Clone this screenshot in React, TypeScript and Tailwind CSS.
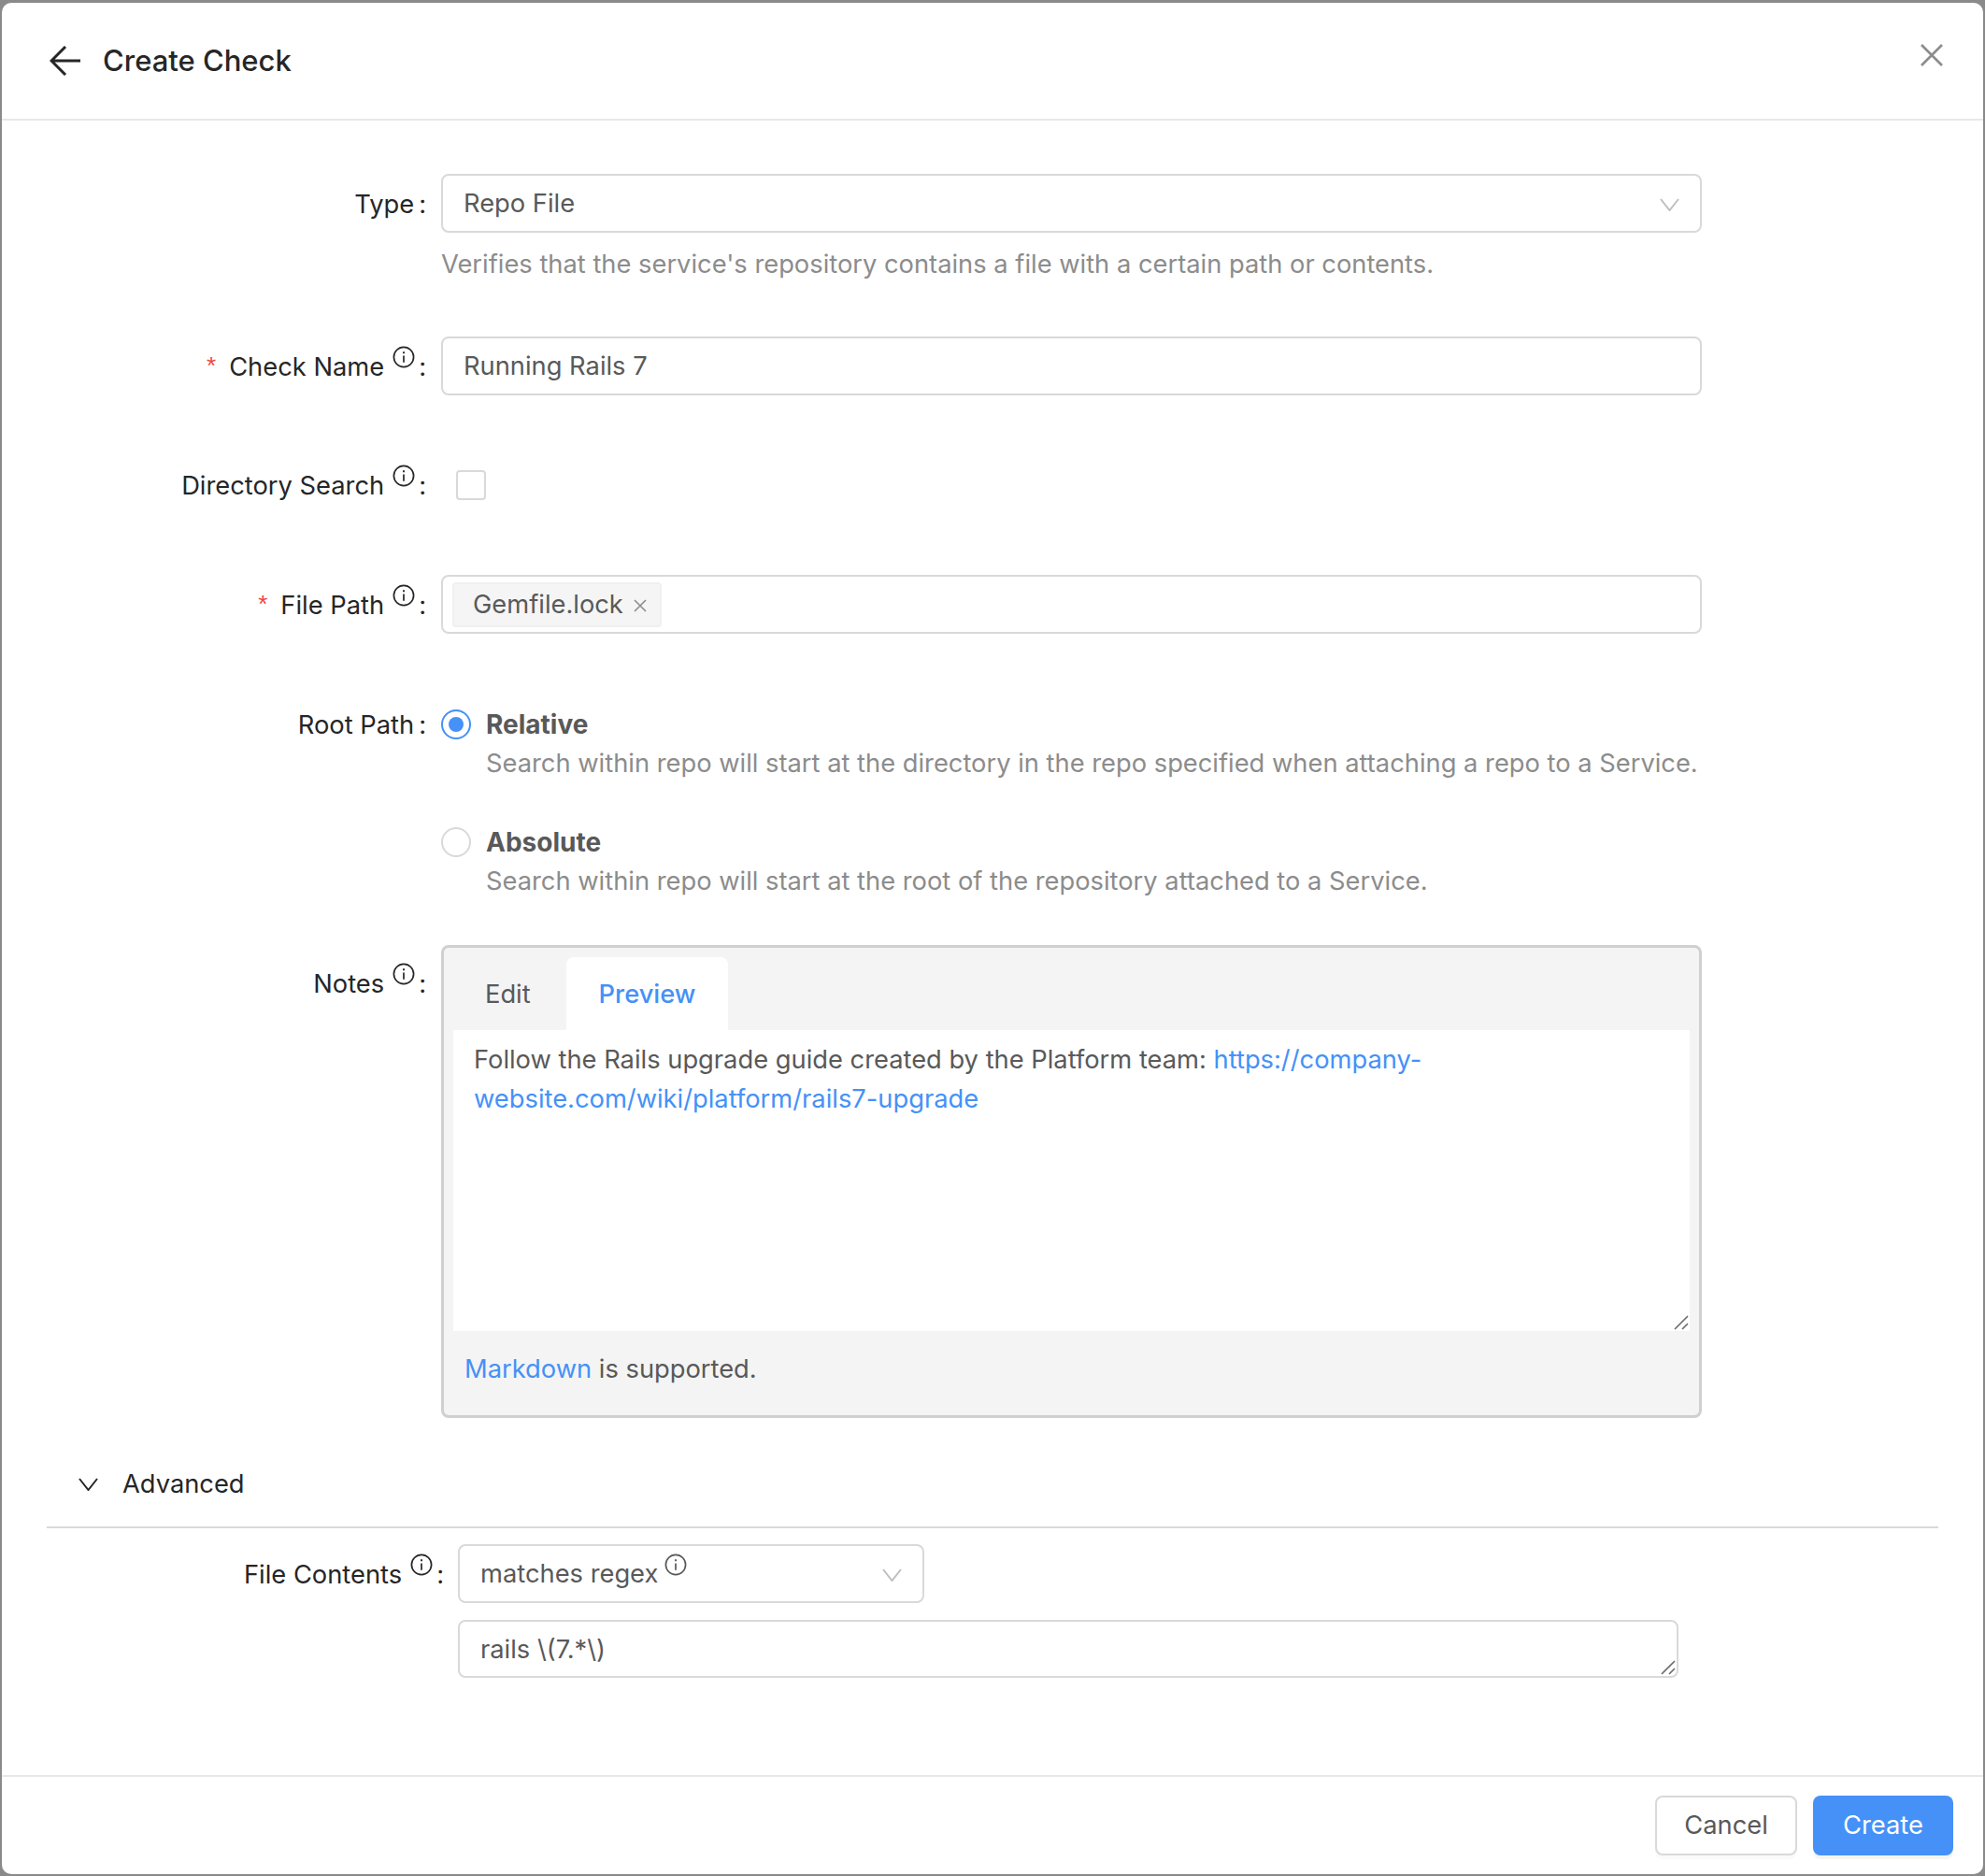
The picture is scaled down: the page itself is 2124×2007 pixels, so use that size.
const font = { fontFamily: 'Inter, "Noto Sans", sans-serif' };

const InfoIcon = ({ className = 'text-[#262626]' }: { className?: string }) => (
  <svg viewBox="0 0 24 24" fill="none" stroke="currentColor" className={`w-6 h-6 shrink-0 ${className}`}>
    <circle cx="12" cy="12" r="10.6" strokeWidth="1.7" />
    <path d="M12 10.5v7.2" strokeWidth="1.7" />
    <path d="M12 6.2v2" strokeWidth="1.9" />
  </svg>
);

const Chevron = ({ className = '' }: { className?: string }) => (
  <svg viewBox="0 0 21 14" fill="none" stroke="currentColor" strokeWidth="2" className={`w-[21px] h-[14px] shrink-0 ${className}`}>
    <path d="M1 1l9.5 12L20 1" />
  </svg>
);

const ResizeHandle = ({ className = '' }: { className?: string }) => (
  <svg viewBox="0 0 16 16" fill="none" stroke="#6b6b6b" strokeWidth="1.6" className={`absolute w-4 h-4 ${className}`}>
    <path d="M1 15L15 1M9 15l6-6" />
  </svg>
);

// label column of a form row, right aligned with the colon at the end
const Label = ({ text, required, info, width = 'w-[406px]' }: { text: string; required?: boolean; info?: boolean; width?: string }) => (
  <div className={`${width} shrink-0 h-[63px] pt-[3px] flex items-center justify-end text-[#262626]`}>
    {required && <span className="text-[#ef4444] mr-[14px] mt-[-4px] text-[26px]" style={{ fontFamily: '"Liberation Sans", sans-serif' }}>*</span>}
    <span>{text}</span>
    {info && <span className="ml-[9px] mt-[-22px]"><InfoIcon /></span>}
    <span className={info ? 'ml-[4px]' : 'ml-[5px]'}>:</span>
  </div>
);

const Box = ({ children, className = '' }: { children: React.ReactNode; className?: string }) => (
  <div className={`h-[63px] pt-[2px] flex items-center border-2 border-[#d9d9d9] rounded-[8px] bg-white text-[#595959] ${className}`}>
    {children}
  </div>
);

const RadioOption = ({ label, desc, checked }: { label: string; desc: string; checked?: boolean }) => (
  <div className="flex gap-[16px]">
    {checked ? (
      <div className="w-8 h-8 mt-[5px] rounded-full border-2 border-[#4591f7] flex items-center justify-center">
        <div className="w-4 h-4 rounded-full bg-[#4591f7]" />
      </div>
    ) : (
      <div className="w-8 h-8 mt-[5px] rounded-full border-2 border-[#d9d9d9]" />
    )}
    <div className="leading-[42px]">
      <div className="font-bold text-[28px] text-[#595959]">{label}</div>
      <div className="text-[#8c8c8c]">{desc}</div>
    </div>
  </div>
);

export default function App() {
  return (
    <div className="w-[2124px] h-[2007px] bg-[#8a8a8a] pt-[3px] px-[2px] pb-[2px] text-[27.3px] overflow-hidden" style={font}>
      <div className="h-full bg-white rounded-[10px] flex flex-col">
        {/* Header */}
        <div className="h-[126px] shrink-0 border-b-2 border-[#e8e8e8] flex justify-between pl-[51px] pr-[43px]">
          <div className="flex items-center gap-[23px] h-[124px]">
            <svg viewBox="0 0 34 32" fill="none" stroke="#262626" strokeWidth="3" className="w-[34px] h-8">
              <path d="M33 16H3M17 1L2 16l15 15" />
            </svg>
            <h1 className="text-[31px] font-medium text-[#262626]">Create Check</h1>
          </div>
          <svg viewBox="0 0 24 24" fill="none" stroke="#8c8c8c" strokeWidth="2.6" className="w-6 h-6 mt-[44px]">
            <path d="M1 1l22 22M23 1L1 23" />
          </svg>
        </div>

        {/* Form */}
        <div className="flex-1 pl-[48px] pr-[48px] pt-[57px]">
          <div className="flex gap-[16px]">
            <Label text="Type" />
            <div className="w-[1349px]">
              <Box className="px-[22px] justify-between">
                <span>Repo File</span>
                <Chevron className="text-[#bfbfbf]" />
              </Box>
              <div className="text-[#8c8c8c] leading-[42px] mt-[13px]">Verifies that the service's repository contains a file with a certain path or contents.</div>
            </div>
          </div>

          <div className="flex gap-[16px] mt-[56px]">
            <Label text="Check Name" required info />
            <Box className="w-[1349px] px-[22px]">Running Rails 7</Box>
          </div>

          <div className="flex gap-[16px] mt-[64px]">
            <Label text="Directory Search" info />
            <div className="h-[63px] flex items-center pl-[16px]">
              <div className="w-8 h-8 border-2 border-[#d9d9d9] rounded-[4px]" />
            </div>
          </div>

          <div className="flex gap-[16px] mt-[65px]">
            <Label text="File Path" required info />
            <Box className="w-[1349px] px-[10px] !pt-0">
              <div className="h-[48px] w-[224px] pt-[2px] flex items-center justify-between pl-[20px] pr-[14px] bg-[#f5f5f5] border-2 border-[#f0f0f0] rounded-[4px]">
                <span>Gemfile.lock</span>
                <svg viewBox="0 0 14 14" fill="none" stroke="#8c8c8c" strokeWidth="1.6" className="w-[14px] h-[14px]">
                  <path d="M1 1l12 12M13 1L1 13" />
                </svg>
              </div>
            </Box>
          </div>

          <div className="flex gap-[16px] mt-[76px]">
            <div className="mt-[-11px]">
              <Label text="Root Path" />
            </div>
            <div className="flex flex-col gap-[42px]">
              <RadioOption label="Relative" checked desc="Search within repo will start at the directory in the repo specified when attaching a repo to a Service." />
              <RadioOption label="Absolute" desc="Search within repo will start at the root of the repository attached to a Service." />
            </div>
          </div>

          <div className="flex gap-[16px] mt-[47px]">
            <div className="mt-[9px]">
              <Label text="Notes" info />
            </div>
            <div className="w-[1349px] h-[506px] border-[3px] border-[#d0d0d0] rounded-[8px] bg-[#f4f4f4] px-[10px] pt-[10px] flex flex-col">
              <div className="flex h-[78px] shrink-0">
                <div className="w-[121px] pl-[34px] pt-[2px] flex items-center text-[#595959]">Edit</div>
                <div className="w-[173px] pt-[2px] flex items-center justify-center bg-white rounded-t-[8px] text-[#4591f7] font-medium">Preview</div>
              </div>
              <div className="relative h-[322px] shrink-0 bg-white px-[22px] pt-[11px] leading-[42px] text-[#595959]">
                <p>
                  Follow the Rails upgrade guide created by the Platform team:{' '}
                  <span className="text-[#4591f7]">https://company-<br />website.com/wiki/platform/rails7-upgrade</span>
                </p>
                <ResizeHandle className="right-[1px] bottom-[1px]" />
              </div>
              <div className="mt-[20px] pl-[12px] leading-[42px] text-[#595959]">
                <span className="text-[#4591f7]">Markdown</span> is supported.
              </div>
            </div>
          </div>

          {/* Advanced */}
          <div className="h-[118px] border-b-2 border-[#d9d9d9] flex items-start">
            <div className="flex items-center gap-[26px] pl-[34px] mt-[50px] h-[42px] text-[#262626]">
              <Chevron />
              <span>Advanced</span>
            </div>
          </div>

          <div className="flex gap-[15px] mt-[17px]">
            <Label text="File Contents" info width="w-[425px]" />
            <div className="flex flex-col gap-[18px]">
              <Box className="w-[499px] pl-[22px] pr-[22px]">
                <span>matches regex</span>
                <span className="ml-[7px] mt-[-22px]"><InfoIcon className="text-[#595959]" /></span>
                <span className="flex-1" />
                <Chevron className="text-[#bfbfbf]" />
              </Box>
              <Box className="relative w-[1306px] px-[22px] !h-[62px]">
                rails \(7.*\)
                <ResizeHandle className="right-[1px] bottom-[1px]" />
              </Box>
            </div>
          </div>
        </div>

        {/* Footer */}
        <div className="h-[106px] shrink-0 border-t-2 border-[#e8e8e8] flex justify-end items-start gap-[17px] pt-[20px] pr-[32px]">
          <button className="w-[152px] h-[64px] border-2 border-[#d9d9d9] rounded-[8px] bg-white text-[#595959] shadow-[0_4px_0_rgba(0,0,0,0.02)]">Cancel</button>
          <button className="w-[150px] h-[64px] rounded-[8px] bg-[#4591f7] text-white shadow-[0_4px_0_rgba(0,0,0,0.04)]">Create</button>
        </div>
      </div>
    </div>
  );
}
